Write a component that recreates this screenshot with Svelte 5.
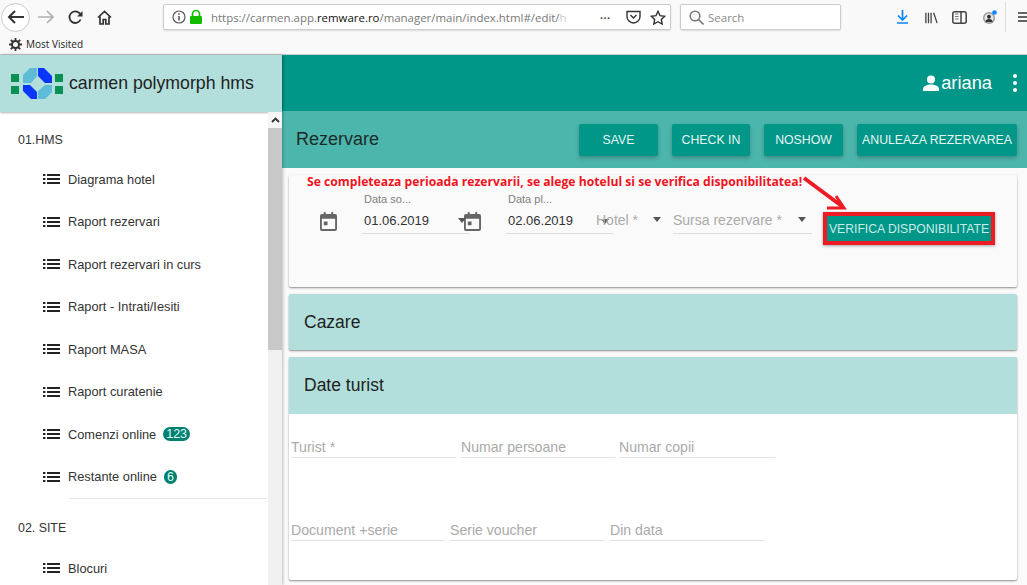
<script>
  const hms = [
    { t: 'Diagrama hotel' }, { t: 'Raport rezervari' }, { t: 'Raport rezervari in curs' },
    { t: 'Raport - Intrati/Iesiti' }, { t: 'Raport MASA' }, { t: 'Raport curatenie' },
    { t: 'Comenzi online', b: '123' }, { t: 'Restante online', b: '6' }
  ];
</script>

{#snippet listIcon()}
  <svg class="list-ic" width="17" height="12" viewBox="0 0 17 12"><path d="M0 1h2.400v2H0zM0 5h2.400v2H0zM0 9h2.400v2H0zM4 1h13v2H4zM4 5h13v2H4zM4 9h13v2H4z" fill="#222"/></svg>
{/snippet}
{#snippet cal()}
  <svg class="cal" width="17" height="19" viewBox="0 0 18 20"><path d="M4 0h2v2h6V0h2v2h2a2 2 0 0 1 2 2v14a2 2 0 0 1-2 2H2a2 2 0 0 1-2-2V4a2 2 0 0 1 2-2h2zM2 7v11h14V7zM4 10h4v4H4z" fill="#666" fill-rule="evenodd"/></svg>
{/snippet}

<div class="page">
  <header class="chrome">
    <div class="navrow">
      <span class="back"><svg width="18" height="16" viewBox="0 0 18 16"><path d="M8 2 2 8l6 6M2.500 8H17" fill="none" stroke="#333" stroke-width="2"/></svg></span>
      <svg class="fwd" width="16" height="14" viewBox="0 0 16 14"><path d="M9 1l6 6-6 6M14 7H0" fill="none" stroke="#b0b0b0" stroke-width="1.700"/></svg>
      <svg class="reload" width="15" height="15" viewBox="0 0 15 15"><path d="M12.600 9.500A5.800 5.800 0 1 1 11.500 3.200L13 5" fill="none" stroke="#333" stroke-width="1.800"/><path d="M14.500 1v5.500H9z" fill="#333"/></svg>
      <svg class="home" width="15" height="15" viewBox="0 0 15 15"><path d="M1 7.500 7.500 1.500 14 7.500M3 6.500V14h3.200V9.500h2.600V14H12V6.500" fill="none" stroke="#333" stroke-width="1.700"/></svg>
      <div class="urlbar">
        <svg width="14" height="14" viewBox="0 0 14 14"><circle cx="7" cy="7" r="6" fill="none" stroke="#555" stroke-width="1.200"/><path d="M6.200 6h1.600v4.500H6.200zM6.200 3.200h1.600v1.600H6.200z" fill="#555"/></svg>
        <svg class="lock" width="12" height="14" viewBox="0 0 12 14"><path d="M2.500 6V4a3.500 3.500 0 0 1 7 0v2" fill="none" stroke="#12bc00" stroke-width="1.700"/><rect y="6" width="12" height="8" rx="1" fill="#12bc00"/></svg>
        <span class="url">https://carmen.app.<b>remware.ro</b>/manager/main/index.html#/edit/<i>h</i></span>
        <span class="dots">•••</span>
        <svg width="15" height="14" viewBox="0 0 15 14"><path d="M1 1.500h13v5a6.500 6.500 0 0 1-13 0zM4.500 5l3 3 3-3" fill="none" stroke="#333" stroke-width="1.400"/></svg>
        <svg class="star" width="16" height="15" viewBox="0 0 16 15"><path d="m8 1.300 2 4.300 4.700.6-3.400 3.200.9 4.600L8 11.700l-4.200 2.300.9-4.600L1.300 6.200 6 5.600z" fill="none" stroke="#333" stroke-width="1.400"/></svg>
      </div>
      <div class="search">
        <svg width="15" height="15" viewBox="0 0 15 15"><circle cx="6" cy="6" r="4.800" fill="none" stroke="#777" stroke-width="1.500"/><path d="m9.500 9.500 5 5" stroke="#777" stroke-width="1.600"/></svg>
        <span>Search</span>
      </div>
      <div class="tools">
        <svg width="13" height="14" viewBox="0 0 13 14"><path d="M6.500 0v9M2 5.500l4.500 4.500L11 5.500M1 13h11" fill="none" stroke="#0a84ff" stroke-width="1.700"/></svg>
        <svg width="13" height="13" viewBox="0 0 15 13"><path d="M1 1v12M4 1v12M7 1v12M10 1l4 12" stroke="#444" stroke-width="1.500" fill="none"/></svg>
        <svg width="15" height="13" viewBox="0 0 15 13"><rect x=".8" y=".8" width="13.400" height="11.400" rx="2" fill="none" stroke="#444" stroke-width="1.500"/><path d="M9 1v11" stroke="#444" stroke-width="1.500"/><path d="M3 3h3.500M3 5.500h3.500M3 8h3.500" stroke="#777"/></svg>
        <svg width="15" height="15" viewBox="0 0 15 15"><circle cx="7" cy="8" r="6" fill="#999"/><circle cx="7" cy="8" r="4.500" fill="#e8e8e8"/><circle cx="7" cy="6.700" r="2" fill="#333"/><path d="M3.500 12a3.500 3 0 0 1 7 0" fill="#333"/><circle cx="12.500" cy="2.500" r="2.300" fill="#0a84ff"/></svg>
        <span class="sep"></span>
        <svg width="12" height="10" viewBox="0 0 12 10"><path d="M0 1h12M0 5h12M0 9h12" stroke="#333" stroke-width="1.500"/></svg>
      </div>
    </div>
    <div class="bookmarks">
      <svg width="13" height="13" viewBox="0 0 13 13"><circle cx="6.500" cy="6.500" r="3.500" fill="none" stroke="#333" stroke-width="2"/><path d="M6.500 0v3M6.500 10v3M0 6.500h3M10 6.500h3M1.800 1.800 4 4M9 9l2.200 2.200M11.200 1.800 9 4M4 9l-2.200 2.200" stroke="#333" stroke-width="1.800"/></svg>
      <span>Most Visited</span>
    </div>
  </header>

  <div class="app">
    <aside class="side">
      <div class="brand">
        <svg width="53" height="33" viewBox="11 67 53 33" aria-label="logo">
          <path d="M11 74h8v8h-8zM11 86h8v8h-8zM55 74h8v8h-8zM55 86h8v8h-8z" fill="#0b9156"/>
          <path d="M37 68h-7l-7 7v8h8l6-7zM52 85h-7l-7 6v8h7l7-7z" fill="#5fbcd9"/>
          <path d="M38 68h6l8 8v7h-7l-7-7zM23 85h7l7 7v7h-6l-8-8z" fill="#0a36fb"/>
        </svg>
        <span>carmen polymorph hms</span>
      </div>
      <div class="side-body">
        <nav class="menu">
          <div class="sec first">01.HMS</div>
          {#each hms as it}
            <div class="item">
              {@render listIcon()}
              <span>{it.t}</span>
              {#if it.b}<em class="badge">{it.b}</em>{/if}
            </div>
          {/each}
          <div class="rule"></div>
          <div class="sec">02. SITE</div>
          <div class="item">{@render listIcon()}<span>Blocuri</span></div>
        </nav>
        <div class="sbar">
          <div class="sbtn"><svg width="9" height="6" viewBox="0 0 9 6"><path d="M1 5l3.500-3.500L8 5" fill="none" stroke="#333" stroke-width="1.800"/></svg></div>
          <div class="thumb"></div>
        </div>
      </div>
    </aside>

    <main class="main">
      <div class="topbar">
        <svg width="16" height="16" viewBox="0 0 16 16"><circle cx="8" cy="4.500" r="4" fill="#fff"/><path d="M0 16v-2c0-3 4-4.500 8-4.500s8 1.500 8 4.500v2z" fill="#fff"/></svg>
        <span class="user">ariana</span>
        <span class="kebab"><i></i><i></i><i></i></span>
      </div>
      <div class="subbar">
        <h1>Rezervare</h1>
        <div class="actions">
          <button class="w-save">SAVE</button>
          <button class="w-check">CHECK IN</button>
          <button class="w-no">NOSHOW</button>
          <button class="w-anu">ANULEAZA REZERVAREA</button>
        </div>
      </div>

      <div class="content">
        <section class="card form">
          <p class="note">Se completeaza perioada rezervarii, se alege hotelul si se verifica disponibilitatea!</p>
          <div class="frow">
            {@render cal()}
            <div class="field date first-d"><span class="lab">Data so...</span><span class="val">01.06.2019</span><b class="caret"></b></div>
            {@render cal()}
            <div class="field date second-d"><span class="lab">Data pl...</span><span class="val">02.06.2019</span><b class="caret"></b></div>
            <div class="field sel hotel"><span class="val">Hotel *</span><b class="caret"></b></div>
            <div class="field sel sursa"><span class="val">Sursa rezervare *</span><b class="caret"></b></div>
            <button class="verify">VERIFICA DISPONIBILITATE</button>
          </div>
          <svg class="arrow" width="50" height="40" viewBox="0 0 50 40"><path d="M4 3 43 32" stroke="#ed1c24" stroke-width="4" fill="none"/><path d="M36 21 44 33 27 33" stroke="#ed1c24" stroke-width="3" fill="none"/></svg>
        </section>

        <section class="card head-only"><h2>Cazare</h2></section>

        <section class="card turist">
          <h2>Date turist</h2>
          <div class="inputs r1">
            <div class="inp w165">Turist *</div>
            <div class="inp w154">Numar persoane</div>
            <div class="inp w156">Numar copii</div>
          </div>
          <div class="inputs r2">
            <div class="inp w154">Document +serie</div>
            <div class="inp w155">Serie voucher</div>
            <div class="inp w155">Din data</div>
          </div>
        </section>
      </div>
    </main>
  </div>
</div>

<style>
  :global(body) { margin: 0; background: #fff; }
  .page { width: 1027px; height: 585px; overflow: hidden; font-family: "Liberation Sans", Arial, sans-serif; color: #222; }

  .chrome { height: 54px; background: #f9f9f9; border-bottom: 1px solid #ccc; font-family: "Open Sans", sans-serif; }
  .navrow { height: 34px; display: flex; align-items: center; position: relative; }
  .back { width: 27px; height: 27px; margin-left: 1px; border: 1px solid #c8c8c8; border-radius: 50%; background: #fff; display: flex; align-items: center; justify-content: center; flex: none; }
  .fwd { margin-left: 8px; flex: none; }
  .reload { margin-left: 14px; flex: none; }
  .home { margin-left: 14px; flex: none; }
  .urlbar { margin-left: 51px; width: 498px; height: 24px; flex: none; background: #fff; border: 1px solid #ccc; border-radius: 2px; box-shadow: 0 1px 2px rgba(0,0,0,.12); display: flex; align-items: center; padding-left: 8px; font-size: 11.450px; color: #777; }
  .lock { margin-left: 4px; }
  .url { margin-left: 9px; width: 354px; flex: none; white-space: nowrap; }
  .url b { font-weight: 400; color: #111; }
  .url i { font-style: normal; color: #ccc; }
  .dots { margin-left: 35px; font-size: 8px; color: #444; letter-spacing: .5px; width: 26px; flex: none; }
  .star { margin-left: 9px; }
  .search { margin-left: 9px; width: 161px; height: 26px; flex: none; background: #fff; border: 1px solid #ccc; border-radius: 2px; box-shadow: 0 1px 2px rgba(0,0,0,.12); display: flex; align-items: center; gap: 4px; padding-left: 8px; box-sizing: border-box; font-size: 11.500px; color: #8a8a8a; }
  .tools { display: flex; align-items: center; margin-left: 55px; flex: none; }
  .tools svg:nth-child(2) { margin-left: 16px; }
  .tools svg:nth-child(3) { margin-left: 14px; }
  .tools svg:nth-child(4) { margin-left: 15px; }
  .sep { width: 1px; height: 30px; background: #ddd; margin: 0 12px 0 8px; }
  .bookmarks { height: 20px; display: flex; align-items: center; gap: 4px; padding-left: 9px; font-size: 10px; color: #222; }

  .app { display: flex; height: 530px; }
  .side { width: 282px; flex: none; background: #fff; display: flex; flex-direction: column; box-shadow: 1px 0 3px rgba(0,0,0,.25); position: relative; z-index: 1; }
  .brand { height: 57px; flex: none; box-sizing: border-box; background: #b2dfdb; display: flex; align-items: center; gap: 5px; padding: 0 0 1px 11px; font-size: 17.700px; color: #222; box-shadow: 0 1px 2px rgba(0,0,0,.3); }
  .side-body { flex: 1; display: flex; min-height: 0; }
  .menu { flex: 1; overflow: hidden; font-size: 12.800px; }
  .sec { height: 20px; line-height: 20px; padding-left: 18px; margin-top: 19px; margin-bottom: 9px; color: #333; font-size: 12.400px; }
  .sec.first { margin-top: 18px; margin-bottom: 8px; }
  .item { height: 42.500px; display: flex; align-items: center; padding-left: 43px; color: #333; white-space: nowrap; }
  .list-ic { flex: none; margin-right: 8px; }
  .badge { margin-left: 7px; background: #00806f; color: #dff; font-style: normal; border-radius: 7px; height: 14px; min-width: 13px; padding: 0 3px; box-sizing: border-box; line-height: 14px; text-align: center; font-size: 12.500px; }
  .rule { height: 1px; background: #e4e4e4; margin: 0 1px 0 69px; }
  .sbar { width: 14px; flex: none; background: #f0f0f0; }
  .sbtn { height: 16px; background: #f5f5f5; display: flex; align-items: center; justify-content: center; }
  .thumb { height: 222px; background: #c8c8c8; }

  .main { flex: 1; min-width: 0; background: #fafafa; display: flex; flex-direction: column; }
  .topbar { height: 56px; flex: none; background: #009688; color: #fff; display: flex; align-items: center; justify-content: flex-end; }
  .user { font-size: 18.300px; margin-left: 2px; }
  .kebab { display: flex; flex-direction: column; gap: 3px; margin: 0 10px 0 21px; }
  .kebab i { display: block; width: 4px; height: 4px; border-radius: 50%; background: #fff; }
  .subbar { height: 57px; flex: none; background: #4db6ac; display: flex; align-items: center; justify-content: space-between; padding: 0 10px 0 14px; box-sizing: border-box; }
  h1 { margin: 0; font-size: 18px; font-weight: 400; color: #1c2b2a; }
  .actions { display: flex; gap: 14px; margin-top: 1px; }
  button { font-family: inherit; border: 0; cursor: pointer; }
  .actions button { height: 32px; background: #009688; color: #e6f5f3; font-size: 12.300px; border-radius: 2px; padding: 0; box-shadow: 0 2px 4px rgba(0,0,0,.25); }
  .w-save { width: 79px; } .w-check { width: 78px; } .w-no { width: 79px; } .w-anu { width: 160px; }

  .content { padding: 7px 10px 0 7px; display: flex; flex-direction: column; gap: 7px; }
  .card { box-shadow: 0 1px 2px rgba(0,0,0,.45); border-radius: 2px; }
  .form { height: 112px; background: #fafafa; position: relative; }
  .note { margin: 0; padding: 0 0 0 18px; font-family: "Open Sans", sans-serif; font-weight: 700; font-size: 12.170px; line-height: 14px; color: #f0141e; white-space: nowrap; height: 14px; }
  .frow { display: flex; align-items: flex-start; padding: 1px 0 0 31px; position: relative; }
  .cal { flex: none; margin-top: 22px; }
  .field { position: relative; box-sizing: border-box; border-bottom: 1px solid #ddd; height: 44px; flex: none; color: #333; font-size: 13px; }
  .lab { display: block; height: 15px; font-size: 11px; line-height: 13px; color: #808080; padding-left: 2px; }
  .val { display: block; line-height: 16px; margin-top: 5px; padding-left: 2px; }
  .date { padding-top: 3px; width: 107px; }
  .first-d { margin-left: 25px; margin-right: -5px; }
  .second-d { margin-left: 25px; }
  .sel { color: #aaa; font-size: 14px; padding-top: 22px; }
  .sel .val { margin-top: 0; padding-left: 0; }
  .hotel { width: 69px; margin-left: -17px; border-bottom: 0; }
  .sursa { width: 139px; margin-left: 8px; }
  .caret { position: absolute; top: 28px; right: 3px; width: 0; height: 0; border: 4.500px solid transparent; border-top: 5px solid #555; border-bottom: 0; }
  .second-d .caret { right: 4px; top: 29px; }
  .hotel .caret { right: 4px; top: 27px; }
  .sursa .caret { right: 6px; top: 27px; }
  .verify { flex: none; margin: 22px 0 0 11px; width: 172px; height: 33px; box-sizing: border-box; background: #009688; border: 4px solid #ed1c24; color: #c9ece8; font-size: 12.200px; padding: 0; white-space: nowrap; box-shadow: 0 1px 3px rgba(0,0,0,.35); }
  .arrow { position: absolute; left: 511px; top: 0; }

  .head-only { height: 56px; background: #b2dfdb; display: flex; align-items: center; }
  h2 { margin: 0; font-size: 17.500px; font-weight: 400; color: #1e1e1e; padding-left: 15px; }
  .turist { background: #fff; height: 223px; display: block; }
  .turist h2 { height: 57px; line-height: 57px; background: #b2dfdb; }
  .inputs { display: flex; gap: 5px; padding-left: 2px; }
  .r1 { margin-top: 24px; }
  .r2 { margin-top: 63px; }
  .inp { box-sizing: border-box; height: 20px; line-height: 18px; border-bottom: 1px solid #e2e2e2; font-size: 14.100px; color: #aaa; white-space: nowrap; }
  .w165 { width: 165px; } .w154 { width: 154px; } .w155 { width: 155px; } .w156 { width: 156px; }
  .r1 .w156 { margin-left: -1px; }
</style>
